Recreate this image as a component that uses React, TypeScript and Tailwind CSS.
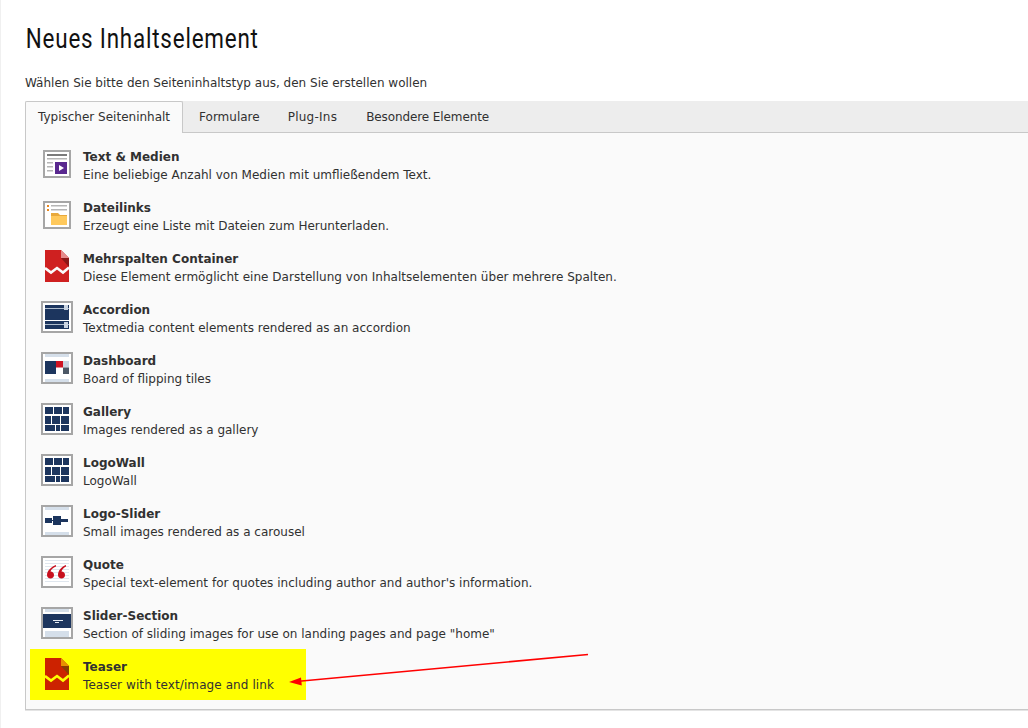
import React from "react";

const Frame = ({ size = 32, children }: { size?: number; children: React.ReactNode }) => (
  <svg width={size} height={size} viewBox={`0 0 ${size} ${size}`} className="block">
    <rect x="1" y="1" width={size - 2} height={size - 2} fill="#fff" stroke="#a6a6a6" strokeWidth="2" />
    {children}
  </svg>
);

const navy = "#1c355e";
const bar = "#d5dfea";

const TextMedia = () => (
  <Frame size={28}>
    <rect x="4" y="4" width="20" height="2" fill="#7a7a7a" />
    <rect x="4" y="8" width="20" height="1.5" fill="#b5b5b5" />
    <rect x="4" y="12" width="6" height="1.5" fill="#b5b5b5" />
    <rect x="4" y="16" width="6" height="1.5" fill="#b5b5b5" />
    <rect x="4" y="20" width="6" height="1.5" fill="#b5b5b5" />
    <rect x="12" y="12" width="12" height="12" fill="#59288f" />
    <path d="M16 15l5 3-5 3z" fill="#fff" />
  </Frame>
);

const Files = () => (
  <Frame size={28}>
    <rect x="4" y="4" width="2" height="2" fill="#e8871e" />
    <rect x="4" y="8" width="2" height="2" fill="#e8871e" />
    <rect x="8" y="4" width="16" height="1.5" fill="#b5b5b5" />
    <rect x="8" y="8" width="16" height="1.5" fill="#b5b5b5" />
    <path d="M8 12h7l2 2h7v10H8z" fill="#e8a93c" />
    <rect x="8" y="15" width="16" height="9" fill="#ffc95c" />
  </Frame>
);

const Torn = ({ main, dark, light, gap }: { main: string; dark: string; light: string; gap: string }) => (
  <svg width="24" height="32" viewBox="0 0 24 32" className="block">
    <path d="M0 0h16l8 8v24H0z" fill={main} />
    <path d="M16 0v8h8z" fill={light} />
    <path d="M16 8h8v9z" fill={dark} />
    <path d="M0 18l6 4.500 6-4.500 6 4.500 6-5" fill="none" stroke={gap} strokeWidth="2.600" />
  </svg>
);

const Accordion = () => (
  <Frame>
    <rect x="4" y="4" width="24" height="15" fill={navy} />
    <rect x="4" y="7" width="24" height="1" fill="#aebccd" />
    <rect x="23" y="4" width="4" height="5" fill="#c9d3e0" />
    <rect x="4" y="20" width="24" height="8" fill={navy} />
    <rect x="4" y="23" width="24" height="1" fill="#aebccd" />
    <rect x="23" y="21" width="4" height="6" fill="#c9d3e0" />
  </Frame>
);

const Dashboard = () => (
  <Frame>
    <rect x="4" y="2" width="24" height="3" fill={bar} />
    <rect x="4" y="27" width="24" height="3" fill={bar} />
    <rect x="4" y="9" width="11" height="13" fill={navy} />
    <rect x="15" y="9" width="7" height="6.500" fill="#cf1322" />
    <rect x="22" y="9" width="6" height="6.500" fill="#c9d3e0" />
    <rect x="22" y="15.500" width="6" height="6.500" fill="#4c5866" />
  </Frame>
);

const Gallery = () => (
  <Frame>
    <rect x="4" y="4" width="8" height="7" fill={navy} />
    <rect x="13" y="4" width="8" height="7" fill={navy} />
    <rect x="22" y="4" width="6" height="7" fill={navy} />
    <rect x="4" y="13" width="6" height="8" fill={navy} />
    <rect x="11" y="13" width="8" height="8" fill={navy} />
    <rect x="20" y="13" width="8" height="8" fill={navy} />
    <rect x="4" y="22" width="10" height="6" fill={navy} />
    <rect x="15" y="22" width="4" height="6" fill={navy} />
    <rect x="20" y="22" width="8" height="6" fill={navy} />
  </Frame>
);

const LogoSlider = () => (
  <Frame>
    <rect x="4" y="2" width="24" height="3" fill={bar} />
    <rect x="4" y="27" width="24" height="3" fill={bar} />
    <rect x="4" y="13" width="7" height="5" fill={navy} />
    <rect x="11" y="15" width="1" height="1" fill={navy} />
    <rect x="12" y="11" width="8" height="9" fill={navy} />
    <rect x="20" y="14" width="7" height="3" fill={navy} />
  </Frame>
);

const Quote = () => (
  <Frame>
    {[4, 7, 10, 13, 16, 19, 22, 25].map((y) => (
      <rect key={y} x="4" y={y} width="24" height="1" fill="#dfe6ee" />
    ))}
    <path d="M15 9c-5 2-9 6-9 10 0 2 1.500 3.500 3.500 3.500S13 21 13 19s-1.500-3.500-3.500-3.500c.5-2 2.500-4 5.500-5z" fill="#c8101e" />
    <path d="M25 9c-5 2-8 6-8 10 0 2 1.500 3.500 3.500 3.500S24 21 24 19s-1.500-3.500-3.500-3.500c.5-2 2-4 4.500-5z" fill="#c8101e" />
  </Frame>
);

const SliderSection = () => (
  <Frame>
    <rect x="4" y="2" width="24" height="3" fill={bar} />
    <rect x="4" y="24" width="24" height="6" fill={bar} />
    <rect x="2" y="7" width="28" height="14" fill={navy} />
    <rect x="12" y="13" width="10" height="1" fill="#e5ebf2" />
    <rect x="14" y="15" width="4" height="1" fill="#e5ebf2" />
  </Frame>
);

const items: { title: string; desc: string; icon: React.ReactNode; track?: string }[] = [
  { title: "Text & Medien", desc: "Eine beliebige Anzahl von Medien mit umfließendem Text.", icon: <TextMedia /> },
  { title: "Dateilinks", desc: "Erzeugt eine Liste mit Dateien zum Herunterladen.", icon: <Files /> },
  {
    title: "Mehrspalten Container",
    desc: "Diese Element ermöglicht eine Darstellung von Inhaltselementen über mehrere Spalten.",
    icon: <Torn main="#cf2020" dark="#8c1616" light="#e58a8a" gap="#fafafa" />,
    track: "tracking-[0.025px]",
  },
  { title: "Accordion", desc: "Textmedia content elements rendered as an accordion", icon: <Accordion /> },
  { title: "Dashboard", desc: "Board of flipping tiles", icon: <Dashboard /> },
  { title: "Gallery", desc: "Images rendered as a gallery", icon: <Gallery /> },
  { title: "LogoWall", desc: "LogoWall", icon: <Gallery /> },
  { title: "Logo-Slider", desc: "Small images rendered as a carousel", icon: <LogoSlider /> },
  {
    title: "Quote",
    desc: "Special text-element for quotes including author and author's information.",
    icon: <Quote />,
    track: "tracking-[0.025px]",
  },
  {
    title: "Slider-Section",
    desc: 'Section of sliding images for use on landing pages and page "home"',
    icon: <SliderSection />,
  },
];

const Row = ({
  title,
  desc,
  icon,
  highlight,
  track,
}: {
  title: string;
  desc: string;
  icon: React.ReactNode;
  highlight?: boolean;
  track?: string;
}) => (
  <div className={`flex h-[51px] items-start ${highlight ? "w-[276px] bg-[#ffff00]" : ""}`}>
    <div className="flex h-[50px] w-[53px] shrink-0 items-center justify-center pl-[1px]">{icon}</div>
    <div className="whitespace-nowrap pt-[9px] text-[12px] leading-[18px] text-[#313131]">
      <div className="font-bold">{title}</div>
      <div className={track}>{desc}</div>
    </div>
  </div>
);

export default function App() {
  return (
    <div
      className="relative h-[728px] w-[1028px] overflow-hidden border-l border-[#f0f0f0] bg-white pl-[24px]"
      style={{ fontFamily: '"DejaVu Sans", Verdana, sans-serif' }}
    >
      <h1
        className="h-[76px] origin-left scale-x-[0.8] whitespace-nowrap pl-[1px] pt-[22px] text-[28px] leading-[34px] tracking-[1px] text-[#111]"
        style={{ fontFamily: '"Roboto", "Liberation Sans", sans-serif', fontWeight: 400 }}
      >
        Neues Inhaltselement
      </h1>
      <p className="h-[25px] whitespace-nowrap text-[12px] leading-[14px] text-[#313131]">
        Wählen Sie bitte den Seiteninhaltstyp aus, den Sie erstellen wollen
      </p>
      <div className="w-[1040px]">
        <div className="flex h-[32px] border-b border-[#c8c8c8] bg-[#ededed] text-[12px] text-[#313131]">
          <div className="flex h-[32px] items-center rounded-t-[2px] border-x border-t border-[#c8c8c8] bg-[#fafafa] px-[12px] pb-[2px]">
            Typischer Seiteninhalt
          </div>
          <div className="flex items-center pl-[16px] pr-[15px]">Formulare</div>
          <div className="flex items-center pl-[13px] pr-[14px] tracking-[0.25px]">Plug-Ins</div>
          <div className="flex items-center pl-[15px] tracking-[-0.1px]">Besondere Elemente</div>
        </div>
        <div className="h-[577px] border-x border-b border-[#c8c8c8] bg-[#fafafa] pl-[4px] pt-[6px] shadow-[0_1px_0_#e4e4e4]">
          {items.map((it) => (
            <Row key={it.title} {...it} />
          ))}
          <Row
            title="Teaser"
            desc="Teaser with text/image and link"
            highlight
            track="tracking-[0.09px]"
            icon={<Torn main="#cc2200" dark="#8a3c00" light="#e89000" gap="#ffff00" />}
          />
        </div>
      </div>
      <svg className="absolute left-0 top-0" width="1028" height="728">
        <line x1="587" y1="654.500" x2="298" y2="681.200" stroke="#ff0000" strokeWidth="1.600" />
        <path d="M288 682l12-4.500.8 8z" fill="#ff0000" />
      </svg>
    </div>
  );
}
